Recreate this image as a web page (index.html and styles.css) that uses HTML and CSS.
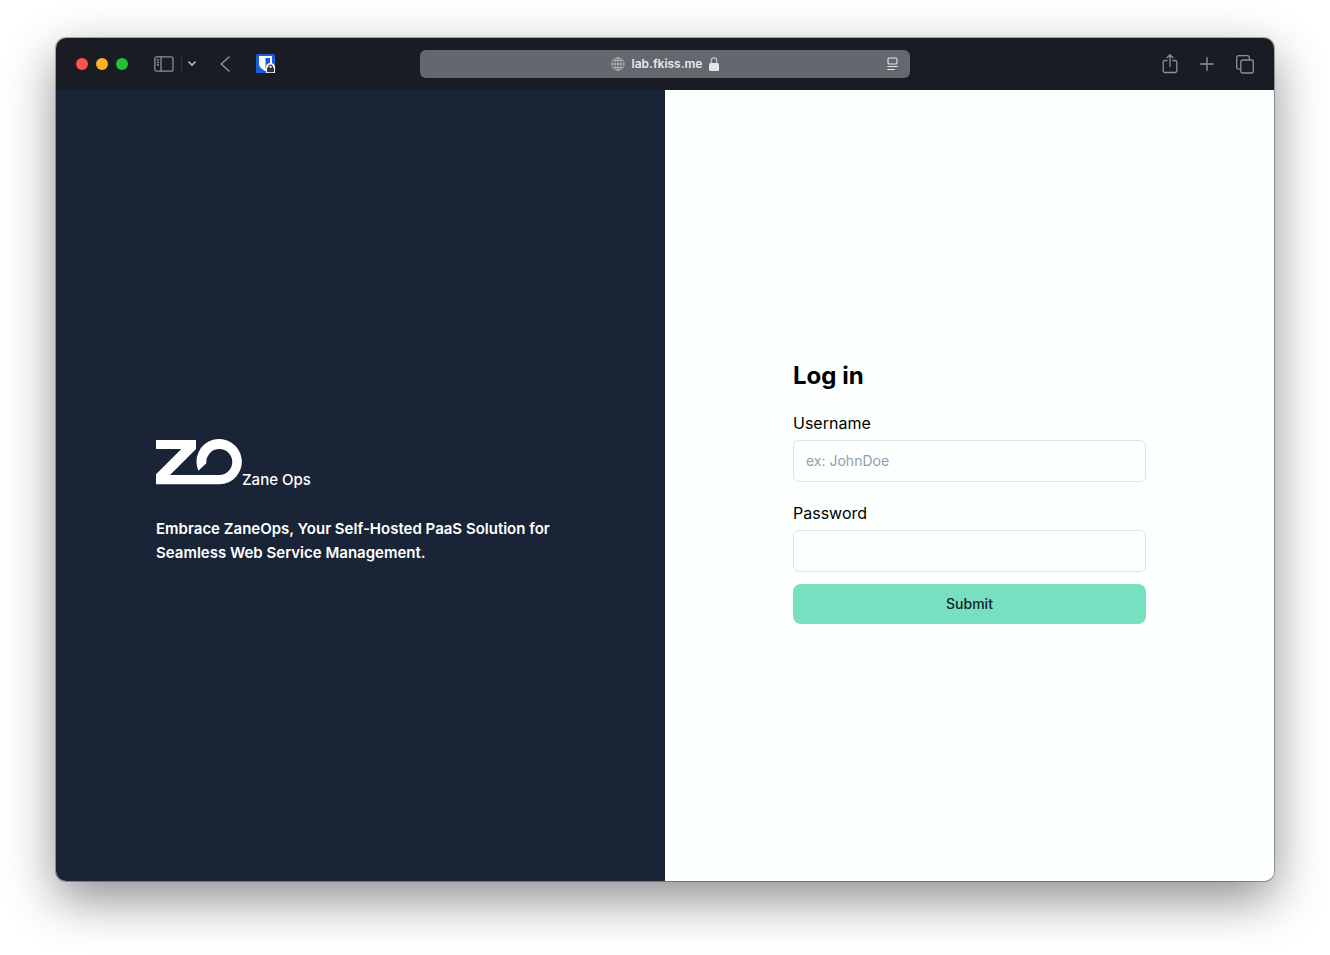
FILE: index.html
```html
<!DOCTYPE html>
<html lang="en">
<head>
<meta charset="utf-8">
<title>Zane Ops</title>
<link rel="stylesheet" href="styles.css">
</head>
<body>
<div class="window">
  <header class="toolbar">
    <div class="tools tools-left">
      <div class="lights">
        <span class="light red"></span><span class="light amber"></span><span class="light green"></span>
      </div>
      <button class="tool sidebar" type="button" aria-label="Sidebar">
        <svg width="20" height="16" viewBox="0 0 20 16" fill="none" stroke="currentColor" stroke-width="1.3"><rect x=".8" y=".8" width="18.2" height="14.4" rx="2"/><path d="M7 1v14M2.8 4h2.2M2.8 6.5h2.2M2.8 9h2.2"/></svg>
      </button>
      <span class="divider"></span>
      <button class="tool chevron" type="button" aria-label="Tab groups">
        <svg width="8" height="6" viewBox="0 0 8 6" fill="none" stroke="currentColor" stroke-width="1.6" stroke-linecap="round" stroke-linejoin="round"><path d="M1 1.2l3 2.9 3-2.9"/></svg>
      </button>
      <button class="tool back" type="button" aria-label="Back">
        <svg width="10" height="16" viewBox="0 0 10 16" fill="none" stroke="currentColor" stroke-width="1.5" stroke-linecap="round" stroke-linejoin="round"><path d="M9 1L1.2 8 9 15"/></svg>
      </button>
      <button class="tool" type="button" aria-label="Password manager">
        <svg width="20" height="20" viewBox="0 0 20 20"><rect width="19" height="19" rx="1.5" fill="#175ddc"/><path d="M3 2h13v8c0 3.500-3.500 5.500-6.500 7C6.500 15.500 3 13.500 3 10z" fill="#fff"/><path d="M9.500 4H14v6c0 1.800-2 3.300-4.500 4.600z" fill="#175ddc"/><path d="M10 19V13.500a4.500 4.500 0 0 1 9 0V19z" fill="#fff"/><rect x="11" y="13.500" width="7" height="4.700" rx=".8" fill="#333"/><path d="M12.600 14v-1a1.900 1.900 0 0 1 3.800 0v1" fill="none" stroke="#333" stroke-width="1.200"/></svg>
      </button>
    </div>
    <div class="address">
      <svg class="globe" width="14" height="14" viewBox="0 0 14 14" fill="none" stroke="currentColor" stroke-width=".9"><circle cx="7" cy="7" r="6.200"/><ellipse cx="7" cy="7" rx="3" ry="6.200"/><path d="M7 .8v12.400M.8 7h12.400M1.900 3.500h10.200M1.900 10.500h10.200"/></svg>
      <span class="host">lab.fkiss.me</span>
      <svg width="10" height="14" viewBox="0 0 10 14"><path d="M2.300 7V3.800a2.700 2.900 0 0 1 5.400 0V7" fill="none" stroke="#c4c5c8" stroke-width="1.200"/><rect y="6" width="10" height="8" rx="1.500" fill="#e4e5e6"/></svg>
      <button class="tool reader" type="button" aria-label="Page menu">
        <svg width="11" height="14" viewBox="0 0 11 14" fill="none" stroke="currentColor" stroke-width="1.100"><rect x="1" y="1" width="9" height="6" rx="1.300"/><path d="M.3 9.500h10.400M.3 12.500h7.400"/></svg>
      </button>
    </div>
    <div class="tools tools-right">
      <button class="tool" type="button" aria-label="Share">
        <svg width="16" height="20" viewBox="0 0 16 20" fill="none" stroke="currentColor" stroke-width="1.300" stroke-linecap="round" stroke-linejoin="round"><path d="M5 6.500H3A1.800 1.800 0 0 0 1.200 8.300v8.400A1.800 1.800 0 0 0 3 18.500h10a1.800 1.800 0 0 0 1.800-1.800V8.300A1.800 1.800 0 0 0 13 6.500h-2M8 12.500V1M5.200 3.500L8 .8l2.800 2.700"/></svg>
      </button>
      <button class="tool" type="button" aria-label="New tab">
        <svg width="14" height="14" viewBox="0 0 14 14" fill="none" stroke="currentColor" stroke-width="1.400" stroke-linecap="round"><path d="M7 .7v12.600M.7 7h12.600"/></svg>
      </button>
      <button class="tool" type="button" aria-label="Tab overview">
        <svg width="18" height="19" viewBox="0 0 18 19" fill="none" stroke="currentColor" stroke-width="1.300"><rect x="4.800" y="5" width="12.500" height="13" rx="2"/><path d="M4.800 14.200H2.700a2 2 0 0 1-2-2V2.700a2 2 0 0 1 2-2h8.600a2 2 0 0 1 2 2V5"/></svg>
      </button>
    </div>
  </header>
  <main class="page">
    <section class="intro">
      <div class="brand">
        <svg width="86" height="46" viewBox="30 27 258 138" fill="#fff" aria-hidden="true"><path d="M30 30H150V57L72 135H220A39 39 0 1 0 181 100L157 122A68 68 0 1 1 220 163H30V133L106 57H30Z"/></svg>
        <span class="brand-name">Zane Ops</span>
      </div>
      <p class="tagline">Embrace ZaneOps, Your Self-Hosted PaaS Solution for Seamless Web Service Management.</p>
    </section>
    <form class="login">
      <h1 class="title">Log in</h1>
      <div class="field">
        <label class="label" for="username">Username</label>
        <input class="input" id="username" type="text" placeholder="ex: JohnDoe">
      </div>
      <div class="field">
        <label class="label" for="password">Password</label>
        <input class="input" id="password" type="password">
      </div>
      <button class="submit" type="button">Submit</button>
    </form>
  </main>
</div>
</body>
</html>
```
FILE: styles.css
```css
* { box-sizing: border-box; }

body {
  margin: 0;
  min-height: 100vh;
  padding: 38px 56px 74px;
  display: flex;
  background: #fff;
  font: 400 16px/24px Inter, "Liberation Sans", sans-serif;
}

.window {
  flex: 1;
  display: flex;
  flex-direction: column;
  overflow: hidden;
  border-radius: 10px;
  box-shadow: 0 0 0 1px rgba(0, 0, 0, .3), 0 18px 50px rgba(0, 0, 0, .45);
}

.toolbar {
  height: 52px;
  padding: 0 20px;
  display: grid;
  grid-template-columns: 1fr 490px 1fr;
  align-items: center;
  background: #1a1c23;
  color: #8d8f94;
}

.tools { display: flex; align-items: center; }
.tools-right { justify-content: flex-end; gap: 22px; }

.tool {
  display: flex;
  padding: 0;
  border: 0;
  background: none;
  color: inherit;
}

.lights { display: flex; gap: 8px; }
.light { width: 12px; height: 12px; border-radius: 50%; }
.red { background: #ff5450; }
.amber { background: #fdb225; }
.green { background: #27c138; }

.sidebar { margin-left: 26px; }
.divider { width: 1px; height: 18px; margin: 0 6px 0 7px; background: #303238; }
.chevron { color: #b5b6ba; }
.back { margin: 0 26px 0 24px; }

.address {
  height: 28px;
  display: grid;
  grid-template-columns: 1fr auto auto auto 1fr;
  align-items: center;
  column-gap: 7px;
  padding: 0 12px;
  border-radius: 6px;
  background: #65676e;
  color: #e6e7e8;
}
.globe { grid-column: 2; color: #b3b4b8; }
.host { font-size: 12px; line-height: 20px; font-weight: 600; }
.reader { grid-column: 5; justify-self: end; }

.page {
  flex: 1;
  display: grid;
  grid-template-columns: 1fr 1fr;
}

.intro {
  display: flex;
  flex-direction: column;
  justify-content: center;
  gap: 28px;
  padding: 32px 100px 0;
  background: #1a2437;
  color: #fff;
  font-size: 15px;
  font-weight: 500;
}
.brand { display: flex; align-items: flex-start; min-height: 50px; }
.brand-name { align-self: flex-end; line-height: 18px; }
.tagline { margin: 0; font-weight: 600; }

.login {
  display: flex;
  flex-direction: column;
  justify-content: center;
  padding: 12px 128px 0;
  background: #fbfffe;
  color: #000;
}
.title { margin: 0 0 19px; font-size: 24px; line-height: 32px; font-weight: 700; }
.field { display: flex; flex-direction: column; gap: 5px; }
.field + .field { margin-top: 19px; }
.input {
  width: 100%;
  height: 42px;
  padding: 0 12px;
  border: 1px solid #dfe3e4;
  border-radius: 6px;
  background: transparent;
  font: inherit;
  font-size: 14px;
}
.input::placeholder { color: #979cab; }
.submit {
  height: 40px;
  margin-top: 12px;
  border: 0;
  border-radius: 8px;
  background: #79dfc1;
  color: #10231f;
  font: inherit;
  font-size: 14px;
  font-weight: 500;
}
```
